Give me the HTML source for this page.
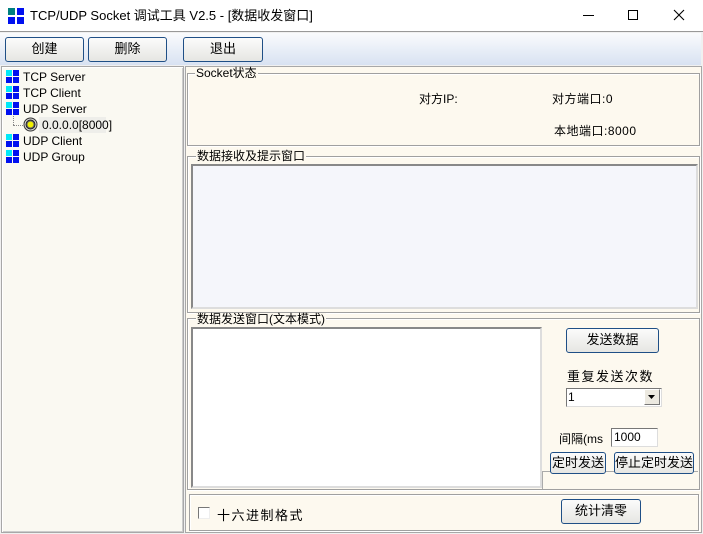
<!DOCTYPE html>
<html><head><meta charset="utf-8"><style>
*{margin:0;padding:0;box-sizing:border-box}
body{width:703px;height:534px;overflow:hidden;background:#f0f0f0;position:relative;font-family:"Liberation Sans","Noto Sans CJK SC",sans-serif;font-size:12px;color:#000}
.a{position:absolute}
.btn{position:absolute;border:1px solid #1f4f86;border-radius:3px;background:linear-gradient(#fbfbfb,#e6e6e2);text-align:center;font-size:13px;line-height:22px}
.grp{position:absolute;border:1px solid #a0a0a0;box-shadow:inset 1px 1px 0 #fff,1px 1px 0 #fff;background:#fdf9ef}
.lg{position:absolute;background:#fdf9ef;font-size:12px;line-height:12px;padding:0 1px}
.ti{position:absolute;left:6px;width:13px;height:13px}
.ti i{position:absolute;width:6px;height:6px;background:#0010f0}
.tt{position:absolute;left:23px;font-size:12px;line-height:14px}
</style></head><body>
<div class="a" style="left:0;top:0;width:703px;height:32px;background:#fff;border-bottom:1px solid #999"></div>
<div class="a" style="left:8px;top:8px;width:16px;height:16px">
<div class="a" style="left:0;top:0;width:7px;height:7px;background:#008080"></div>
<div class="a" style="left:9px;top:0;width:7px;height:7px;background:#0010f0"></div>
<div class="a" style="left:0;top:9px;width:7px;height:7px;background:#0010f0"></div>
<div class="a" style="left:9px;top:9px;width:7px;height:7px;background:#0010f0"></div></div>
<div class="a" style="left:30px;top:7px;font-size:13px;line-height:17px">TCP/UDP Socket 调试工具 V2.5 - [数据收发窗口]</div>
<div class="a" style="left:583px;top:15px;width:11px;height:1px;background:#000"></div>
<div class="a" style="left:628px;top:10px;width:10px;height:10px;border:1px solid #000"></div>
<svg class="a" style="left:673px;top:9px" width="12" height="12"><path d="M1 1L11 11M11 1L1 11" stroke="#000" stroke-width="1.1"/></svg>
<div class="a" style="left:0;top:33px;width:701px;height:32px;background:linear-gradient(#fafbfd,#d8e2f2)"></div>
<div class="btn" style="left:5px;top:37px;width:79px;height:25px">创建</div>
<div class="btn" style="left:88px;top:37px;width:79px;height:25px">删除</div>
<div class="btn" style="left:183px;top:37px;width:80px;height:25px">退出</div>
<div class="a" style="left:1px;top:66px;width:183px;height:467px;background:#faf9f2;border:1px solid #a8a8a8;box-shadow:inset 1px 1px 0 #fff,inset -1px -1px 0 #ccc"></div>
<div class="ti" style="top:70px"><i style="left:0;top:0;background:#00e8f8"></i><i style="left:7px;top:0"></i><i style="left:0;top:7px"></i><i style="left:7px;top:7px"></i></div><div class="tt" style="top:70px">TCP Server</div>
<div class="ti" style="top:86px"><i style="left:0;top:0;background:#00e8f8"></i><i style="left:7px;top:0"></i><i style="left:0;top:7px"></i><i style="left:7px;top:7px"></i></div><div class="tt" style="top:86px">TCP Client</div>
<div class="ti" style="top:102px"><i style="left:0;top:0;background:#00e8f8"></i><i style="left:7px;top:0"></i><i style="left:0;top:7px"></i><i style="left:7px;top:7px"></i></div><div class="tt" style="top:102px">UDP Server</div>
<div class="a" style="left:13px;top:116px;width:1px;height:9px;border-left:1px dotted #888"></div>
<div class="a" style="left:13px;top:125px;width:10px;border-top:1px dotted #888"></div>
<svg class="a" style="left:23px;top:117px" width="15" height="15"><circle cx="7.5" cy="7.5" r="6.5" fill="#ddd" stroke="#333"/><circle cx="7.5" cy="7.5" r="4.5" fill="#666" stroke="#222"/><circle cx="7.5" cy="7.5" r="3" fill="#f0f000"/></svg>
<div class="a" style="left:39px;top:117px;width:67px;height:16px;background:#eeeeea"></div>
<div class="tt" style="left:42px;top:118px">0.0.0.0[8000]</div>
<div class="ti" style="top:134px"><i style="left:0;top:0;background:#00e8f8"></i><i style="left:7px;top:0"></i><i style="left:0;top:7px"></i><i style="left:7px;top:7px"></i></div><div class="tt" style="top:134px">UDP Client</div>
<div class="ti" style="top:150px"><i style="left:0;top:0;background:#00e8f8"></i><i style="left:7px;top:0"></i><i style="left:0;top:7px"></i><i style="left:7px;top:7px"></i></div><div class="tt" style="top:150px">UDP Group</div>
<div class="a" style="left:185px;top:66px;width:517px;height:467px;background:#fdf9ef;border:1px solid #a8a8a8"></div>
<div class="grp" style="left:187px;top:73px;width:513px;height:73px"></div>
<div class="lg" style="left:195px;top:67px">Socket状态</div>
<div class="a" style="left:419px;top:90px;font-size:12px">对方IP:</div>
<div class="a" style="left:552px;top:90px;font-size:12px;letter-spacing:0.5px">对方端口:0</div>
<div class="a" style="left:554px;top:122px;font-size:12px;letter-spacing:0.5px">本地端口:8000</div>
<div class="grp" style="left:187px;top:156px;width:513px;height:157px"></div>
<div class="lg" style="left:196px;top:150px">数据接收及提示窗口</div>
<div class="a" style="left:191px;top:164px;width:507px;height:145px;background:#f5f6fb;border:2px solid #888;border-right-color:#ddd;border-bottom-color:#ddd"></div>
<div class="grp" style="left:187px;top:318px;width:513px;height:172px"></div>
<div class="lg" style="left:196px;top:313px">数据发送窗口(文本模式)</div>
<div class="a" style="left:191px;top:327px;width:351px;height:161px;background:#fff;border:2px solid #888;border-right-color:#ddd;border-bottom-color:#ddd"></div>
<div class="a" style="left:542px;top:471px;width:156px;height:18px;border-left:1px solid #aaa;border-top:1px solid #aaa"></div>
<div class="btn" style="left:566px;top:328px;width:93px;height:25px">发送数据</div>
<div class="a" style="left:567px;top:366px;font-size:13px;letter-spacing:1.5px">重复发送次数</div>
<div class="a" style="left:566px;top:388px;width:96px;height:19px;background:#fff;border:1px solid #777;border-right-color:#ddd;border-bottom-color:#ddd"></div>
<div class="a" style="left:568px;top:390px;font-size:12px">1</div>
<div class="a" style="left:644px;top:389px;width:16px;height:16px;background:#ece9e0;border:1px solid #fff;border-right-color:#777;border-bottom-color:#777"></div>
<svg class="a" style="left:648px;top:395px" width="8" height="5"><path d="M0 0H7L3.5 4Z" fill="#000"/></svg>
<div class="a" style="left:559px;top:430px;font-size:12px">间隔(ms</div>
<div class="a" style="left:611px;top:428px;width:47px;height:19px;background:#fff;border:1px solid #777;border-right-color:#ddd;border-bottom-color:#ddd;font-size:12px;line-height:17px;padding-left:2px">1000</div>
<div class="btn" style="left:550px;top:452px;width:56px;height:22px;line-height:20px">定时发送</div>
<div class="btn" style="left:614px;top:452px;width:80px;height:22px;line-height:20px">停止定时发送</div>
<div class="grp" style="left:189px;top:494px;width:510px;height:37px"></div>
<div class="a" style="left:198px;top:507px;width:12px;height:12px;background:#fff;border:1px solid #777;border-right-color:#eee;border-bottom-color:#eee"></div>
<div class="a" style="left:217px;top:505px;font-size:13px;letter-spacing:1.5px">十六进制格式</div>
<div class="btn" style="left:561px;top:499px;width:80px;height:25px">统计清零</div>
</body></html>
